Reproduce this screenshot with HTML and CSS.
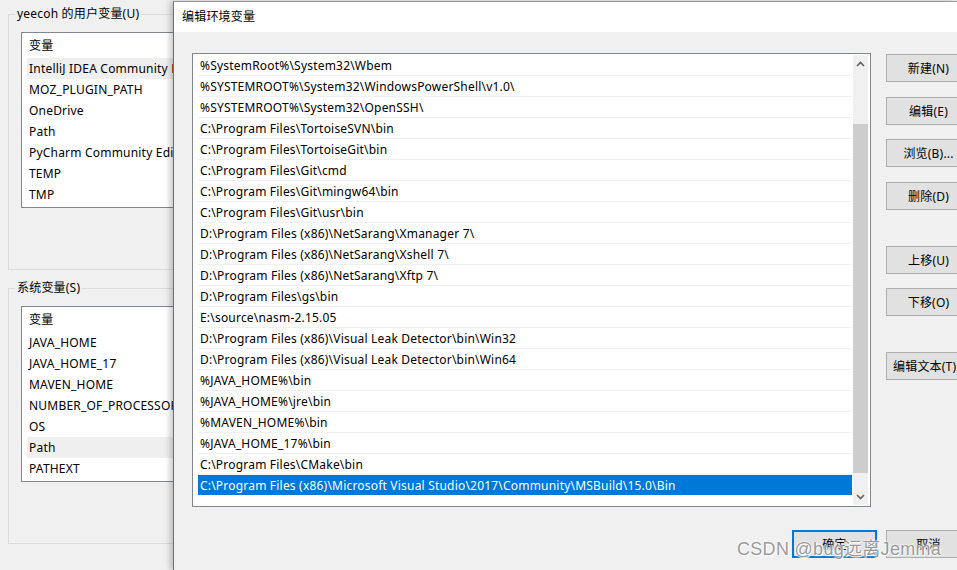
FILE: index.html
```html
<!DOCTYPE html>
<html lang="zh-CN">
<head>
<meta charset="utf-8">
<title>编辑环境变量</title>
<link rel="stylesheet" href="styles.css">
</head>
<body>
<div class="desk">
  <div class="bgwin">
    <fieldset class="grp">
      <legend>yeecoh 的用户变量(U)</legend>
      <div class="vlist">
        <div class="vhead">变量</div>
        <div class="vrow hl">IntelliJ IDEA Community Edition</div>
        <div class="vrow">MOZ_PLUGIN_PATH</div>
        <div class="vrow">OneDrive</div>
        <div class="vrow">Path</div>
        <div class="vrow">PyCharm Community Edition</div>
        <div class="vrow">TEMP</div>
        <div class="vrow">TMP</div>
      </div>
    </fieldset>
    <fieldset class="grp grp-sys">
      <legend>系统变量(S)</legend>
      <div class="vlist">
        <div class="vhead">变量</div>
        <div class="vrow">JAVA_HOME</div>
        <div class="vrow">JAVA_HOME_17</div>
        <div class="vrow">MAVEN_HOME</div>
        <div class="vrow">NUMBER_OF_PROCESSORS</div>
        <div class="vrow">OS</div>
        <div class="vrow hl">Path</div>
        <div class="vrow">PATHEXT</div>
      </div>
    </fieldset>
  </div>

  <div class="dialog">
    <div class="titlebar">编辑环境变量</div>
    <div class="dbody">
      <div class="plist">
        <div class="prows">
          <div class="prow">%SystemRoot%\System32\Wbem</div>
          <div class="prow">%SYSTEMROOT%\System32\WindowsPowerShell\v1.0\</div>
          <div class="prow">%SYSTEMROOT%\System32\OpenSSH\</div>
          <div class="prow">C:\Program Files\TortoiseSVN\bin</div>
          <div class="prow">C:\Program Files\TortoiseGit\bin</div>
          <div class="prow">C:\Program Files\Git\cmd</div>
          <div class="prow">C:\Program Files\Git\mingw64\bin</div>
          <div class="prow">C:\Program Files\Git\usr\bin</div>
          <div class="prow">D:\Program Files (x86)\NetSarang\Xmanager 7\</div>
          <div class="prow">D:\Program Files (x86)\NetSarang\Xshell 7\</div>
          <div class="prow">D:\Program Files (x86)\NetSarang\Xftp 7\</div>
          <div class="prow">D:\Program Files\gs\bin</div>
          <div class="prow">E:\source\nasm-2.15.05</div>
          <div class="prow">D:\Program Files (x86)\Visual Leak Detector\bin\Win32</div>
          <div class="prow">D:\Program Files (x86)\Visual Leak Detector\bin\Win64</div>
          <div class="prow">%JAVA_HOME%\bin</div>
          <div class="prow">%JAVA_HOME%\jre\bin</div>
          <div class="prow">%MAVEN_HOME%\bin</div>
          <div class="prow">%JAVA_HOME_17%\bin</div>
          <div class="prow">C:\Program Files\CMake\bin</div>
          <div class="prow sel">C:\Program Files (x86)\Microsoft Visual Studio\2017\Community\MSBuild\15.0\Bin</div>
        </div>
        <div class="vscroll">
          <div class="arrow">
            <svg width="9" height="6" viewBox="0 0 9 6"><polyline points="1,5 4.5,1.5 8,5" fill="none" stroke="#606060" stroke-width="1.6"/></svg>
          </div>
          <div class="track">
            <div class="thumb"></div>
          </div>
          <div class="arrow">
            <svg width="9" height="6" viewBox="0 0 9 6"><polyline points="1,1 4.5,4.5 8,1" fill="none" stroke="#606060" stroke-width="1.6"/></svg>
          </div>
        </div>
      </div>
      <div class="btncol">
        <button class="btn">新建(N)</button>
        <button class="btn g1">编辑(E)</button>
        <button class="btn">浏览(B)...</button>
        <button class="btn g1">删除(D)</button>
        <button class="btn gbig">上移(U)</button>
        <button class="btn">下移(O)</button>
        <button class="btn gbig wide">编辑文本(T)</button>
      </div>
      <button class="btn ok">确定</button>
      <button class="btn cancel">取消</button>
    </div>
  </div>
  <div class="watermark">CSDN @bug远离Jemma</div>
</div>
</body>
</html>
```

FILE: styles.css
```css
* { box-sizing: border-box; }

html, body {
  margin: 0;
  padding: 0;
}

body {
  width: 957px;
  height: 570px;
  overflow: hidden;
  background: #f0f0f0;
  font-family: "Noto Sans", "Noto Sans CJK SC", sans-serif;
  font-size: 12px;
  letter-spacing: 0.2px;
  color: #000;
}

.desk {
  position: relative;
  display: flex;
  width: 957px;
  height: 570px;
  overflow: hidden;
}

/* background window */
.bgwin {
  flex: 0 0 173px;
  width: 173px;
  overflow: hidden;
  padding: 6px 0 0 8px;
}

.grp {
  width: 420px;
  margin: 0;
  padding: 10px 0 61px 12px;
  border: 1px solid #dcdcdc;
  min-inline-size: 0;
}

.grp legend {
  margin-left: -6px;
  padding: 0 2px;
  line-height: 16px;
  height: 16px;
  font-family: "Noto Sans", "Noto Sans CJK SC", sans-serif;
}

.grp-sys {
  margin-top: 10px;
}

.vlist {
  width: 400px;
  height: 176px;
  background: #fff;
  border: 1px solid #828790;
  padding-left: 5px;
}

.vhead {
  height: 25px;
  line-height: 25px;
  padding-left: 2px;
}

.vrow {
  height: 21px;
  line-height: 21px;
  padding-left: 2px;
  white-space: nowrap;
}

.vrow.hl {
  background: #efefef;
}

/* dialog */
.dialog {
  flex: 1 1 auto;
  z-index: 1;
  margin-top: 1px;
  background: #f0f0f0;
  border-left: 1px solid #6f6f6f;
  border-top: 1px solid #9a9a9a;
  box-shadow: -3px 0 6px rgba(0, 0, 0, 0.22);
  overflow: hidden;
}

.titlebar {
  height: 30px;
  line-height: 30px;
  background: #fff;
  padding-left: 8px;
  white-space: nowrap;
}

.dbody {
  display: grid;
  grid-template-columns: 679px 85px;
  column-gap: 15px;
  row-gap: 23px;
  padding: 21px 0 0 18px;
}

.plist {
  display: flex;
  height: 454px;
  background: #fff;
  border: 1px solid #828790;
}

.prows {
  flex: 1 1 auto;
  padding: 1px 1px 0 5px;
  overflow: hidden;
}

.prow {
  height: 21px;
  padding: 2px 0 0 2px;
  line-height: 18px;
  border-bottom: 1px solid #f0f0f0;
  white-space: nowrap;
}

.prow.sel {
  background: #0078d7;
  color: #fff;
  border-bottom-color: #fff;
}

.vscroll {
  flex: 0 0 15px;
  display: flex;
  flex-direction: column;
  margin: 1px 2px 1px 0;
  background: #f0f0f0;
}

.arrow {
  height: 17px;
  display: flex;
  align-items: center;
  justify-content: center;
}

.track {
  flex: 1 1 auto;
  padding: 52px 0 15px;
  display: flex;
}

.thumb {
  flex: 1 1 auto;
  background: #cdcdcd;
}

.btncol {
  display: flex;
  flex-direction: column;
  gap: 14px;
  padding-top: 1px;
}

.btn {
  width: 85px;
  height: 28px;
  padding: 0;
  margin: 0;
  background: #e1e1e1;
  border: 1px solid #adadad;
  font-family: "Noto Sans", "Noto Sans CJK SC", sans-serif;
  font-size: 12px;
  letter-spacing: 0.2px;
  color: #000;
  white-space: nowrap;
  text-align: center;
}

.btn.g1 { margin-top: 1px; }
.btn.gbig { margin-top: 22px; }
.btn.wide { text-align: left; padding-left: 6px; }

.ok {
  grid-column: 1;
  justify-self: end;
  margin-right: -6px;
  border: 2px solid #0078d7;
}

.cancel {
  grid-column: 2;
}

.watermark {
  position: absolute;
  left: 737px;
  top: 537px;
  font-family: "Liberation Sans", "Noto Sans CJK SC", sans-serif;
  font-size: 18px;
  line-height: 24px;
  letter-spacing: 0.3px;
  color: rgba(120, 120, 120, 0.75);
  text-shadow: 0 0 2px #fff, 0 0 2px #fff, 1px 1px 1px #fff;
  white-space: nowrap;
  z-index: 2;
}
```
